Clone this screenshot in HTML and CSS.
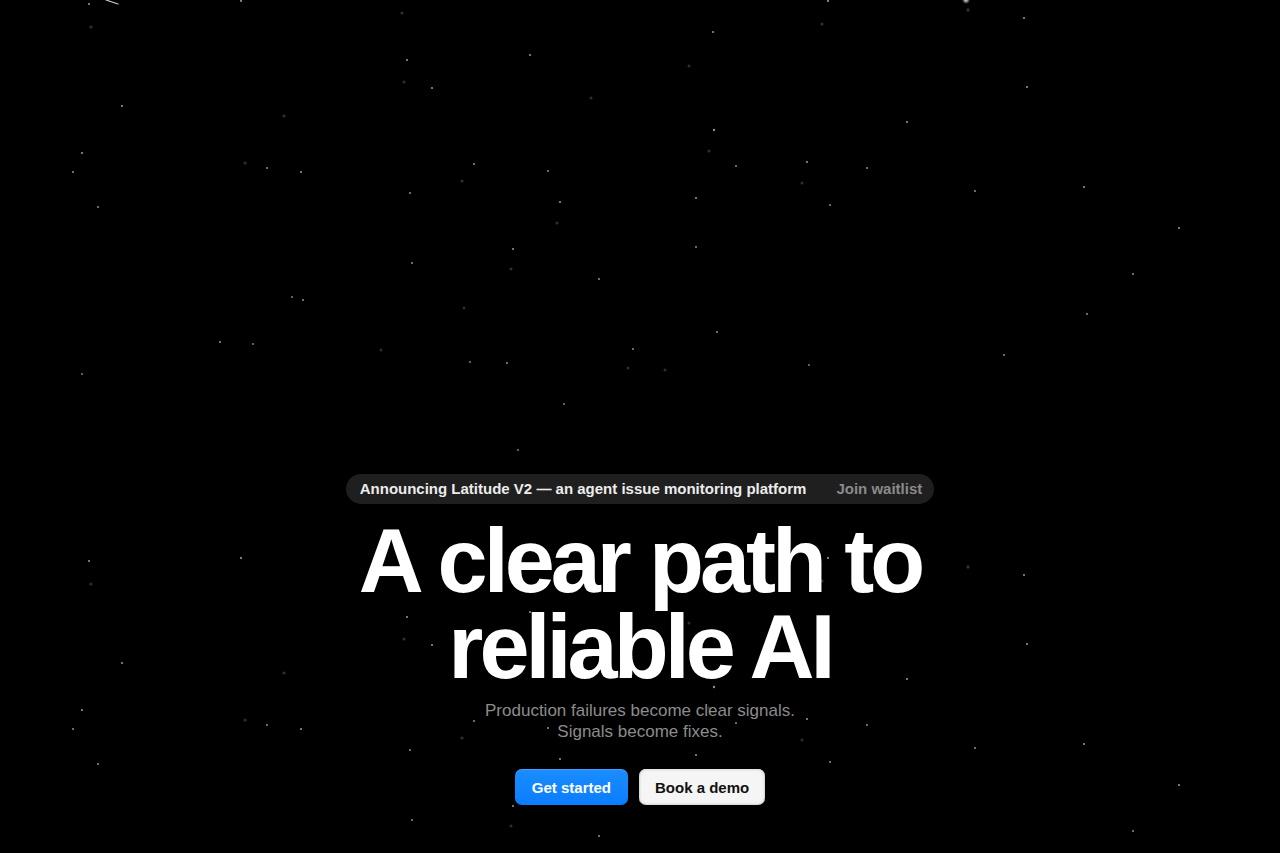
FILE: index.html
```html
<!DOCTYPE html>
<html lang="en">
<head>
<meta charset="utf-8">
<title>Latitude — A clear path to reliable AI</title>
<link rel="stylesheet" href="styles.css">
</head>
<body>
<div class="page">
  <svg class="stars" width="100%" height="100%" xmlns="http://www.w3.org/2000/svg" aria-hidden="true">
    <defs>
      <radialGradient id="glow">
        <stop offset="0" stop-color="#ffffff" stop-opacity="0.9"/>
        <stop offset="1" stop-color="#ffffff" stop-opacity="0"/>
      </radialGradient>
      <pattern id="field" width="1280" height="557" patternUnits="userSpaceOnUse">
        <g class="s">
          <circle cx="89" cy="4" r="1.1"/>
          <circle cx="241" cy="1" r="1.1"/>
          <circle cx="407" cy="60" r="1.1"/>
          <circle cx="530" cy="55" r="1.1"/>
          <circle cx="432" cy="88" r="1.1"/>
          <circle cx="122" cy="106" r="1.1"/>
          <circle cx="82" cy="153" r="1.1"/>
          <circle cx="73" cy="172" r="1"/>
          <circle cx="267" cy="168" r="1"/>
          <circle cx="301" cy="172" r="1.1"/>
          <circle cx="474" cy="164" r="1"/>
          <circle cx="548" cy="171" r="1"/>
          <circle cx="410" cy="193" r="1"/>
          <circle cx="560" cy="202" r="1.1"/>
          <circle cx="98" cy="207" r="1"/>
          <circle cx="513" cy="249" r="1.1"/>
          <circle cx="412" cy="263" r="1"/>
          <circle cx="599" cy="279" r="1"/>
          <circle cx="828" cy="1" r="1.1"/>
          <circle cx="1024" cy="18" r="1.1"/>
          <circle cx="713" cy="32" r="1.1"/>
          <circle cx="1027" cy="87" r="1.1"/>
          <circle cx="907" cy="122" r="1.1"/>
          <circle cx="714" cy="130" r="1.2"/>
          <circle cx="736" cy="166" r="1"/>
          <circle cx="807" cy="162" r="1.1"/>
          <circle cx="867" cy="168" r="1"/>
          <circle cx="696" cy="198" r="1.1"/>
          <circle cx="830" cy="205" r="1"/>
          <circle cx="975" cy="191" r="1"/>
          <circle cx="1084" cy="187" r="1.1"/>
          <circle cx="696" cy="247" r="1"/>
          <circle cx="1179" cy="228" r="1.1"/>
          <circle cx="1133" cy="274" r="1"/>
          <circle cx="292" cy="297" r="0.9"/>
          <circle cx="303" cy="300" r="1"/>
          <circle cx="220" cy="342" r="1"/>
          <circle cx="253" cy="344" r="0.9"/>
          <circle cx="470" cy="362" r="0.9"/>
          <circle cx="507" cy="363" r="1"/>
          <circle cx="633" cy="349" r="1"/>
          <circle cx="82" cy="374" r="0.9"/>
          <circle cx="564" cy="404" r="0.9"/>
          <circle cx="518" cy="450" r="0.9"/>
          <circle cx="717" cy="332" r="1"/>
          <circle cx="809" cy="365" r="0.9"/>
          <circle cx="1004" cy="355" r="1"/>
          <circle cx="1087" cy="314" r="1"/>
        </g>
        <g class="d">
          <circle cx="91" cy="27" r="1.6"/>
          <circle cx="402" cy="13" r="1.6"/>
          <circle cx="404" cy="82" r="1.5"/>
          <circle cx="591" cy="98" r="1.5"/>
          <circle cx="284" cy="116" r="1.6"/>
          <circle cx="245" cy="163" r="1.6"/>
          <circle cx="462" cy="181" r="1.6"/>
          <circle cx="557" cy="223" r="1.5"/>
          <circle cx="511" cy="269" r="1.5"/>
          <circle cx="968" cy="10" r="1.7"/>
          <circle cx="822" cy="24" r="1.6"/>
          <circle cx="689" cy="66" r="1.5"/>
          <circle cx="709" cy="151" r="1.5"/>
          <circle cx="802" cy="183" r="1.5"/>
          <circle cx="464" cy="308" r="1.5"/>
          <circle cx="381" cy="350" r="1.5"/>
          <circle cx="628" cy="368" r="1.5"/>
          <circle cx="665" cy="370" r="1.5"/>
        </g>
      </pattern>
    </defs>
    <rect width="100%" height="100%" fill="url(#field)"/>
    <circle cx="966" cy="0" r="4" fill="url(#glow)"/>
    <line x1="106" y1="0" x2="118" y2="4" stroke="#cfcfcf" stroke-width="1.2" stroke-linecap="round"/>
  </svg>

  <main class="hero">
    <div class="announce">
      <span class="announce-text">Announcing Latitude V2 — an agent issue monitoring platform</span>
      <span class="announce-link">Join waitlist</span>
    </div>
    <h1 class="title">A clear path to<br>reliable AI</h1>
    <p class="subtitle">Production failures become clear signals.<br>Signals become fixes.</p>
    <div class="actions">
      <a class="btn btn-primary" href="#">Get started</a>
      <a class="btn btn-light" href="#">Book a demo</a>
    </div>
  </main>
</div>
</body>
</html>
```

FILE: styles.css
```css
html, body {
  margin: 0;
  padding: 0;
  background: #000;
}

body {
  font-family: "Liberation Sans", Arial, Helvetica, sans-serif;
  color: #fff;
}

.page {
  position: relative;
  height: 853px;
  overflow: hidden;
  background: #000;
}

.stars {
  position: absolute;
  inset: 0;
  z-index: 0;
}

.stars .s circle {
  fill: #8f8f8f;
}

.stars .d circle {
  fill: #2e2e2e;
}

.hero {
  position: relative;
  z-index: 1;
  display: flex;
  flex-direction: column;
  align-items: center;
  padding-top: 474px;
}

.announce {
  display: flex;
  align-items: center;
  gap: 30px;
  height: 30px;
  padding: 0 12px 0 14px;
  background: #1f1f1f;
  border-radius: 15px;
  font-size: 15px;
  font-weight: 700;
  line-height: 30px;
  white-space: nowrap;
}

.announce-text {
  color: #ececec;
}

.announce-link {
  color: #8a8a8a;
}

.title {
  margin: 14px 0 0;
  font-size: 90px;
  line-height: 86px;
  font-weight: 700;
  letter-spacing: -0.044em;
  text-align: center;
  color: #fff;
}

.subtitle {
  margin: 10px 0 0;
  font-size: 17px;
  line-height: 21px;
  color: #8c8c8c;
  text-align: center;
}

.actions {
  display: flex;
  gap: 11px;
  margin-top: 27px;
}

.btn {
  display: flex;
  align-items: center;
  height: 36px;
  box-sizing: border-box;
  border-radius: 7px;
  font-size: 15px;
  font-weight: 700;
  text-decoration: none;
}

.btn-primary {
  padding: 0 17px;
  color: #fff;
  background: linear-gradient(#1b8dff, #0a7dff);
  box-shadow: inset 0 1px 0 rgba(255, 255, 255, 0.18);
}

.btn-light {
  padding: 0 16px;
  color: #111;
  background: #f5f5f5;
  box-shadow: inset 0 0 3px rgba(0, 0, 0, 0.3), inset 0 1px 0 #fff;
}
```
